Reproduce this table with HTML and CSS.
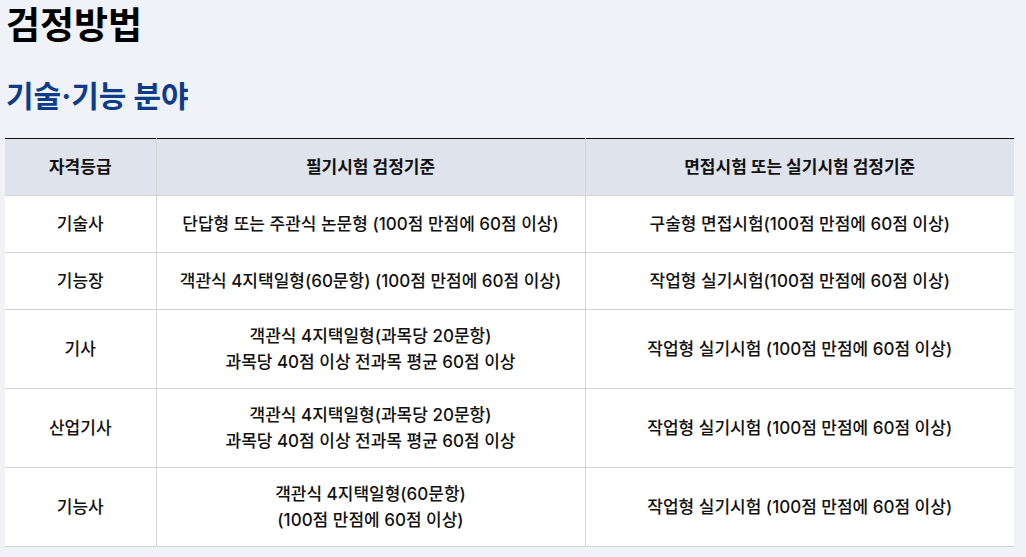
FILE: index.html
```html
<!DOCTYPE html>
<html lang="ko">
<head>
<meta charset="utf-8">
<title>검정방법</title>
<link rel="stylesheet" href="styles.css">
</head>
<body>
<main class="page">
  <h1 class="title">검정방법</h1>
  <h2 class="subtitle">기술·기능 분야</h2>
  <table class="exam-table">
    <colgroup>
      <col class="col-grade">
      <col class="col-written">
      <col class="col-practical">
    </colgroup>
    <thead>
      <tr>
        <th>자격등급</th>
        <th>필기시험 검정기준</th>
        <th>면접시험 또는 실기시험 검정기준</th>
      </tr>
    </thead>
    <tbody>
      <tr>
        <td>기술사</td>
        <td>단답형 또는 주관식 논문형 (100점 만점에 60점 이상)</td>
        <td>구술형 면접시험(100점 만점에 60점 이상)</td>
      </tr>
      <tr>
        <td>기능장</td>
        <td>객관식 4지택일형(60문항) (100점 만점에 60점 이상)</td>
        <td>작업형 실기시험(100점 만점에 60점 이상)</td>
      </tr>
      <tr>
        <td>기사</td>
        <td>객관식 4지택일형(과목당 20문항)<br>과목당 40점 이상 전과목 평균 60점 이상</td>
        <td>작업형 실기시험 (100점 만점에 60점 이상)</td>
      </tr>
      <tr>
        <td>산업기사</td>
        <td>객관식 4지택일형(과목당 20문항)<br>과목당 40점 이상 전과목 평균 60점 이상</td>
        <td>작업형 실기시험 (100점 만점에 60점 이상)</td>
      </tr>
      <tr>
        <td>기능사</td>
        <td>객관식 4지택일형(60문항)<br>(100점 만점에 60점 이상)</td>
        <td>작업형 실기시험 (100점 만점에 60점 이상)</td>
      </tr>
    </tbody>
  </table>
</main>
</body>
</html>
```

FILE: styles.css
```css
html, body {
  margin: 0;
  padding: 0;
  background: #f0f2f7;
}

body {
  font-family: "Inter", "Noto Sans CJK KR", sans-serif;
  color: #111;
}

.page {
  padding: 0 12px 10px 5px;
}

.title {
  margin: 0;
  font-size: 37px;
  font-weight: 700;
  color: #000;
  line-height: 51px;
  padding-left: 1px;
}

.subtitle {
  margin: 25px 0 0;
  font-size: 30px;
  font-weight: 700;
  color: #0d3d8a;
  line-height: 40px;
  padding-left: 1px;
}

.exam-table {
  margin-top: 22px;
  width: 100%;
  border-collapse: collapse;
  background: #fff;
  table-layout: fixed;
}

.col-grade {
  width: 151px;
}

.exam-table th,
.exam-table td {
  border: 1px solid #d4d4d4;
  text-align: center;
  vertical-align: middle;
  font-size: 17px;
  font-weight: 500;
  color: #111;
  line-height: 26px;
  padding: 13px 8px;
}

.exam-table th {
  background: #dfe3eb;
  font-weight: 700;
  height: 30px;
  border-top: 1px solid #111;
}

.exam-table td {
  height: 30px;
}

.exam-table tr > :first-child {
  border-left: none;
}

.exam-table tr > :last-child {
  border-right: none;
}
```
